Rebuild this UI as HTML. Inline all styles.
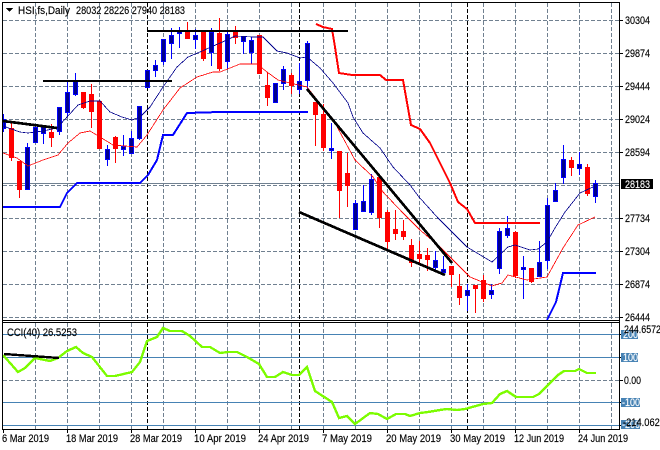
<!DOCTYPE html>
<html><head><meta charset="utf-8"><style>
html,body{margin:0;padding:0;background:#fff}
svg{display:block}
text{font-family:"Liberation Sans",sans-serif;font-size:11px;fill:#000;stroke:#000;stroke-width:.15px}
text.w{fill:#fff;stroke:#fff}
</style></head><body>
<svg width="660" height="450" viewBox="0 0 660 450" xmlns="http://www.w3.org/2000/svg">
<rect width="660" height="450" fill="#fff"/>
<defs><clipPath id="m"><rect x="3" y="3" width="616" height="317"/></clipPath></defs>
<g shape-rendering="crispEdges">
<path fill="none" stroke="#708090" stroke-dasharray="4 2" d="M3 20.5H619M3 53.5H619M3 86.5H619M3 119.5H619M3 152.5H619M3 185.5H619M3 218.5H619M3 251.5H619M3 284.5H619M3 317.5H619M3 380.5H619"/>
<path fill="none" stroke="#708090" stroke-dasharray="4 2" d="M35.5 3V320M67.5 3V320M99.5 3V320M131.5 3V320M163.5 3V320M195.5 3V320M227.5 3V320M259.5 3V320M291.5 3V320M323.5 3V320M355.5 3V320M387.5 3V320M419.5 3V320M451.5 3V320M483.5 3V320M515.5 3V320M547.5 3V320M579.5 3V320M611.5 3V320M35.5 323V429M67.5 323V429M99.5 323V429M131.5 323V429M163.5 323V429M195.5 323V429M227.5 323V429M259.5 323V429M291.5 323V429M323.5 323V429M355.5 323V429M387.5 323V429M419.5 323V429M451.5 323V429M483.5 323V429M515.5 323V429M547.5 323V429M579.5 323V429M611.5 323V429"/>
<path fill="none" stroke="#000" stroke-dasharray="4 2" d="M147.5 3V320M299.5 3V320M467.5 3V320M147.5 323V429M299.5 323V429M467.5 323V429"/>
<path stroke="#708090" d="M3 183.5H619"/>
<path stroke="#4682b4" d="M3 334.5H619M3 357.5H619M3 402.5H619M3 425.5H619"/>
<path fill="none" stroke="#0000ff" d="M3.5 114V132M27.5 143V190M35.5 124V143M43.5 125V144M59.5 107V135M67.5 82V117M75.5 73V96M107.5 145V166M123.5 135V156M131.5 131V153M139.5 106V140M147.5 70V87M155.5 60V77M163.5 39V65M171.5 28V59M179.5 27V48M195.5 29V49M211.5 28V66M227.5 32V69M243.5 36V54M251.5 37V64M275.5 83V102M283.5 66V90M299.5 63V94M307.5 41V90M331.5 123V159M355.5 200V229M363.5 185V212M371.5 174V215M435.5 251V272M443.5 256V273M467.5 284V311M491.5 284V299M499.5 228V274M507.5 216V238M523.5 256V299M539.5 241V276M547.5 198V269M555.5 183V202M563.5 145V184M579.5 152V175M595.5 180V203"/>
<path fill="#00008b" stroke="#0000ff" d="M3.5 119.5h2v9h-2zM25.5 147.5h4v42h-4zM33.5 127.5h4v15h-4zM41.5 125.5h4v8h-4zM57.5 107.5h4v24h-4zM65.5 92.5h4v20h-4zM73.5 81.5h4v13h-4zM105.5 149.5h4v10h-4zM121.5 146.5h4v3h-4zM129.5 138.5h4v15h-4zM137.5 106.5h4v32h-4zM145.5 70.5h4v17h-4zM153.5 65.5h4v5h-4zM161.5 39.5h4v22h-4zM169.5 35.5h4v8h-4zM177.5 30.5h4v3h-4zM193.5 35.5h4v4h-4zM209.5 32.5h4v20h-4zM225.5 34.5h4v27h-4zM241.5 36.5h4v5h-4zM249.5 40.5h4v12h-4zM273.5 83.5h4v19h-4zM281.5 69.5h4v14h-4zM297.5 81.5h4v8h-4zM305.5 43.5h4v37h-4zM329.5 148.5h4v2h-4zM353.5 203.5h4v26h-4zM361.5 201.5h4v10h-4zM369.5 179.5h4v33h-4zM433.5 260.5h4v7h-4zM441.5 269.5h4v3h-4zM465.5 290.5h4v5h-4zM489.5 290.5h4v4h-4zM497.5 231.5h4v37h-4zM505.5 228.5h4v7h-4zM521.5 267.5h4v2h-4zM537.5 262.5h4v14h-4zM545.5 205.5h4v55h-4zM553.5 190.5h4v11h-4zM561.5 159.5h4v18h-4zM577.5 164.5h4v4h-4zM593.5 183.5h4v13h-4z"/>
<path fill="none" stroke="#ff0000" d="M11.5 121V161M19.5 161V198M51.5 124V147M83.5 92V109M91.5 84V128M99.5 100V148M115.5 136V163M187.5 22V39M203.5 31V61M219.5 18V71M235.5 26V44M259.5 35V73M267.5 72V106M291.5 73V94M315.5 102V146M323.5 104V151M339.5 151V218M347.5 153V207M379.5 177V228M387.5 210V250M395.5 210V240M403.5 220V240M411.5 239V267M419.5 241V263M427.5 248V271M451.5 266V287M459.5 274V305M475.5 285V313M483.5 275V302M515.5 231V278M531.5 268V283M571.5 157V176M587.5 164V196"/>
<path fill="#ff0000" stroke="#ff0000" d="M9.5 128.5h4v29h-4zM17.5 161.5h4v28h-4zM49.5 132.5h4v5h-4zM81.5 92.5h4v15h-4zM89.5 94.5h4v17h-4zM97.5 101.5h4v47h-4zM113.5 137.5h4v11h-4zM185.5 32.5h4v6h-4zM201.5 31.5h4v27h-4zM217.5 33.5h4v35h-4zM233.5 32.5h4v5h-4zM257.5 35.5h4v38h-4zM265.5 85.5h4v12h-4zM289.5 75.5h4v10h-4zM313.5 102.5h4v12h-4zM321.5 114.5h4v33h-4zM337.5 151.5h4v39h-4zM345.5 173.5h4v12h-4zM377.5 177.5h4v40h-4zM385.5 212.5h4v29h-4zM393.5 229.5h4v4h-4zM401.5 231.5h4v5h-4zM409.5 245.5h4v17h-4zM417.5 254.5h4v4h-4zM425.5 255.5h4v4h-4zM449.5 266.5h4v8h-4zM457.5 286.5h4v11h-4zM473.5 285.5h4v3h-4zM481.5 280.5h4v18h-4zM513.5 232.5h4v43h-4zM529.5 268.5h4v13h-4zM569.5 160.5h4v7h-4zM585.5 167.5h4v26h-4z"/>
<g clip-path="url(#m)" fill="none">
<path stroke="#00008b" stroke-width=".8" d="M3 126L20 132 28 133 43 131 57 128 67 117 78 105 90 101 100 101 110 112 122 117 132 120 140 117 150 107 163 87 177 67 188 57 200 52 220 43 227 40 235 36 253 37 263 37 277 51 287 53 300 58 307 57 320 68 333 83 348 103 353 117 363 133 380 148 393 167 410 185 419 197 438 218 467 247 492 262 508 247 515 245 530 250 538 249 547 242 555 228 565 212 580 193 593 187"/>
<path stroke="#ff0000" stroke-width=".8" d="M3 153L17 158 28 166 43 160 58 155 68 143 80 133 90 131 100 137 113 145 137 147 147 135 163 110 180 88 197 77 213 72 220 72 230 68 240 64 257 64 267 72 278 80 290 83 307 87 323 107 335 123 355 160 373 177 383 192 402 212 420 230 440 247 453 260 470 277 492 286 502 283 508 275 527 280 547 277 563 248 578 225 595 217"/>
<path stroke="#0000ff" stroke-width="2" d="M3 207H60L67 193 77 183H140L148 175 157 160 163 135H173L187 113 220 112H308M547 320L556 302 563 273H596"/>
<path stroke="#ff0000" stroke-width="2" d="M316 24L323 27 332 29 335 47 339 73 352 75H380L386 80H403L411 125 420 129 430 143 440 163 450 183 458 202 467 209 475 223H540"/>
<path stroke="#000" stroke-width="2" d="M43 81H172M147 31H348"/>
<path stroke="#000" stroke-width="2.7" d="M3 121L57 128M307 89L452 263M299 212L445 275"/>
</g>
<path fill="none" stroke="#7cfc00" stroke-width="2.4" d="M3 355L18 372 25 368 35 358 50 361 58 358 67 351 76 347 83 353 92 357 107 376 115 376 132 372 140 362 147 341 157 337 163 328 170 331 182 331 190 336 202 347 210 347 220 353 228 352 237 352 247 357 259 364 267 377 275 377 283 372 292 375 299 375 307 367 315 391 332 402 339 418 347 416 355 424 370 413 378 414 387 419 396 414 405 414 410 416 420 413 428 412 440 410 447 409 457 410 465 409 483 404 492 403 500 394 507 391 516 397 533 397 539 394 558 375 564 371 575 371 579 369 587 373 596 373"/>
<path fill="none" stroke="#000" stroke-width="2.4" d="M4 354L59 358"/>
<path fill="none" stroke="#000" d="M2.5 2.5H619.5V429.5H2.5ZM2 320.5H620M2 322.5H620"/>
<path fill="none" stroke="#000" d="M620 20.5H623M620 53.5H623M620 86.5H623M620 119.5H623M620 152.5H623M620 218.5H623M620 251.5H623M620 284.5H623M620 317.5H623M620 334.5H623M620 357.5H623M620 380.5H623M620 402.5H623M620 425.5H623M3.5 430V433M67.5 430V433M131.5 430V433M195.5 430V433M259.5 430V433M323.5 430V433M387.5 430V433M451.5 430V433M515.5 430V433M579.5 430V433"/>
<path d="M6 8H13L9.5 12Z" fill="#000"/>
<rect x="621" y="179" width="32" height="10" fill="#000"/>
<rect x="621" y="330" width="17" height="9" fill="#4682b4"/>
<rect x="621" y="353" width="17" height="9" fill="#4682b4"/>
<rect x="621" y="398" width="19" height="9" fill="#4682b4"/>
<rect x="621" y="420" width="19" height="9" fill="#4682b4"/>
</g>
<text x="18" y="14" textLength="52" lengthAdjust="spacingAndGlyphs">HSI,fs,Daily</text>
<text x="76" y="14" textLength="109" lengthAdjust="spacingAndGlyphs">28032 28226 27940 28183</text>
<text x="7" y="336" textLength="70" lengthAdjust="spacingAndGlyphs">CCI(40) 26.5253</text>
<g>
<text x="625" y="24" textLength="25" lengthAdjust="spacingAndGlyphs">30304</text>
<text x="625" y="57" textLength="25" lengthAdjust="spacingAndGlyphs">29874</text>
<text x="625" y="90" textLength="25" lengthAdjust="spacingAndGlyphs">29444</text>
<text x="625" y="123" textLength="25" lengthAdjust="spacingAndGlyphs">29024</text>
<text x="625" y="156" textLength="25" lengthAdjust="spacingAndGlyphs">28594</text>
<text class="w" x="625" y="188" textLength="25" lengthAdjust="spacingAndGlyphs">28183</text>
<text x="625" y="222" textLength="25" lengthAdjust="spacingAndGlyphs">27734</text>
<text x="625" y="255" textLength="25" lengthAdjust="spacingAndGlyphs">27304</text>
<text x="625" y="288" textLength="25" lengthAdjust="spacingAndGlyphs">26874</text>
<text x="625" y="321" textLength="25" lengthAdjust="spacingAndGlyphs">26444</text>
<text class="w" x="623" y="338" textLength="15" lengthAdjust="spacingAndGlyphs">200</text>
<text class="w" x="623" y="361" textLength="15" lengthAdjust="spacingAndGlyphs">100</text>
<text x="624" y="384" textLength="17" lengthAdjust="spacingAndGlyphs">0.00</text>
<text class="w" x="622" y="406" textLength="18" lengthAdjust="spacingAndGlyphs">-100</text>
<text class="w" x="622" y="428" textLength="18" lengthAdjust="spacingAndGlyphs">-200</text>
<text x="624" y="333" textLength="37" lengthAdjust="spacingAndGlyphs">244.6572</text>
<text x="623" y="426" textLength="42" lengthAdjust="spacingAndGlyphs">-214.0625</text>
</g>
<g>
<text x="2" y="442" textLength="47" lengthAdjust="spacingAndGlyphs">6 Mar 2019</text>
<text x="66" y="442" textLength="52" lengthAdjust="spacingAndGlyphs">18 Mar 2019</text>
<text x="130" y="442" textLength="52" lengthAdjust="spacingAndGlyphs">28 Mar 2019</text>
<text x="194" y="442" textLength="52" lengthAdjust="spacingAndGlyphs">10 Apr 2019</text>
<text x="258" y="442" textLength="51" lengthAdjust="spacingAndGlyphs">24 Apr 2019</text>
<text x="322" y="442" textLength="50" lengthAdjust="spacingAndGlyphs">7 May 2019</text>
<text x="386" y="442" textLength="55" lengthAdjust="spacingAndGlyphs">20 May 2019</text>
<text x="450" y="442" textLength="55" lengthAdjust="spacingAndGlyphs">30 May 2019</text>
<text x="514" y="442" textLength="50" lengthAdjust="spacingAndGlyphs">12 Jun 2019</text>
<text x="578" y="442" textLength="50" lengthAdjust="spacingAndGlyphs">24 Jun 2019</text>
</g>
</svg>
</body></html>
